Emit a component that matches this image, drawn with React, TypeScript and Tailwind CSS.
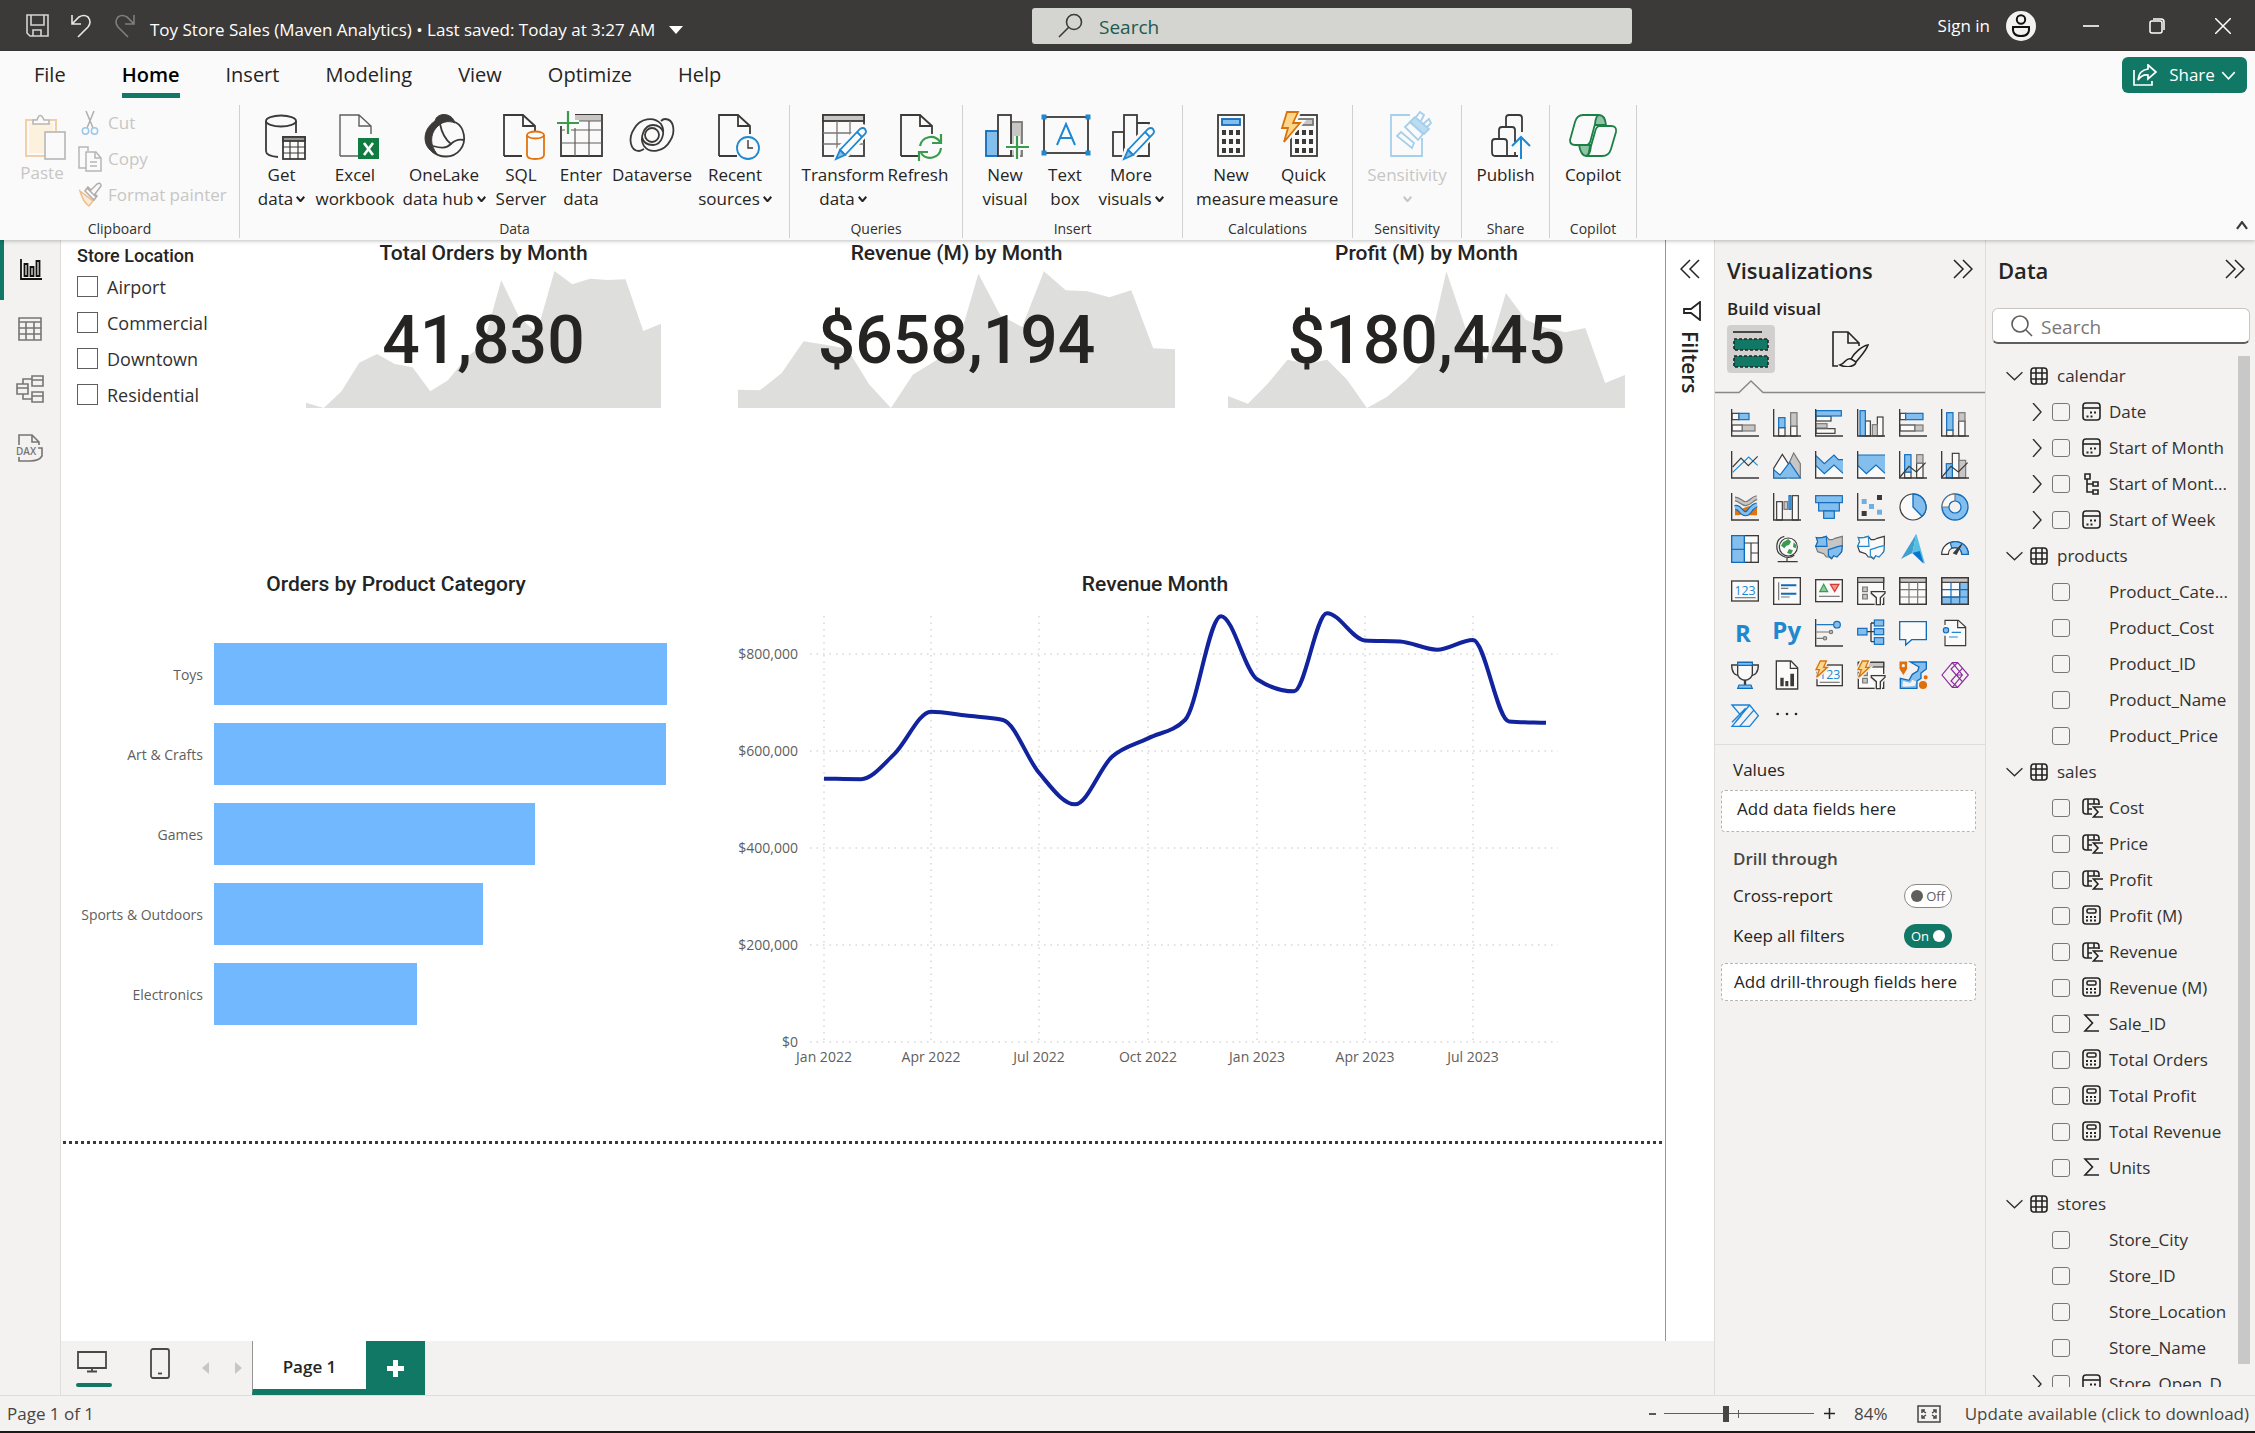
import React from "react";

type P = { children?: React.ReactNode };

const DARK = "#3b3a38";
const BLUE = "#0f6cbd";
const SKY = "#83beec";
const GRAY = "#797775";
const SILVER = "#c8c6c4";
const PAPER = "#fafafa";
const GREEN = "#3a9b4c";

/* ---------- shared helpers ---------- */

function Chevron({ dir, w = 12, h = 8, stroke = 2, color = "currentColor" }: { dir: "down" | "up" | "right"; w?: number; h?: number; stroke?: number; color?: string }) {
  const d = dir === "down" ? "M1 1L6 7L11 1" : dir === "up" ? "M1 7L6 1L11 7" : "M2 0L10 4L2 8";
  return (
    <svg width={w} height={h} viewBox="0 0 12 8" preserveAspectRatio="none" fill="none" stroke={color} strokeWidth={stroke} className="shrink-0">
      <path d={d} vectorEffect="non-scaling-stroke" />
    </svg>
  );
}

function DoubleChevron({ left }: { left?: boolean }) {
  return (
    <svg width="20" height="20" viewBox="0 0 20 20" fill="none" stroke="#252423" strokeWidth="1.5">
      <path d={left ? "M10 1L1 10L10 19M19 1L10 10L19 19" : "M10 1L19 10L10 19M1 1L10 10L1 19"} />
    </svg>
  );
}

/* ---------- ribbon icons, 48 x 48 ---------- */

function Big({ children }: P) {
  return (
    <svg width="48" height="50" viewBox="0 -1 48 50" fill="none" stroke={DARK} strokeWidth="1.8" className="shrink-0 overflow-visible">
      {children}
    </svg>
  );
}

const docPath = (x: number) => `M${x} 44V3H${x + 19}L${x + 31} 14V22M${x + 19} 3V14H${x + 31}M${x} 44H${x + 18}`;

function Pencil() {
  return (
    <g>
      <path d="M41 16Q44 14 46 17Q48 20 46 22L26 44L17 48L20 38Z" fill={PAPER} stroke={PAPER} strokeWidth="6" />
      <path d="M41 17Q44 15 46 17Q48 20 46 22L26 43L21 38Z" fill="#fafafa" stroke="#1e88d0" />
      <path d="M21 38L26 43L17 47Z" fill={SKY} stroke="#1e88d0" />
      <path d="M38 20L43 25" stroke="#1e88d0" />
    </g>
  );
}

function Dots({ x, y }: { x: number; y: number }) {
  return (
    <g fill={DARK} stroke="none">
      {[0, 1, 2].map((r) => [0, 1, 2].map((c) => <rect key={`${r}${c}`} x={x + c * 7} y={y + r * 9} width="4" height="5" />))}
    </g>
  );
}

const icons: Record<string, React.ReactNode> = {
  getData: (
    <Big>
      <ellipse cx="23" cy="9" rx="15" ry="5.5" fill={PAPER} />
      <path d="M8 9V39Q8 44 20 45M38 9V21" />
      <rect x="25" y="25" width="22" height="22" fill={PAPER} />
      <rect x="25" y="25" width="22" height="4" fill="#979593" />
      <path d="M25 35H47M25 41H47M32 29V47M40 29V47" strokeWidth="1.2" />
    </Big>
  ),
  excel: (
    <Big>
      <path d={docPath(9)} stroke="#605e5c" strokeWidth="1.4" />
      <rect x="27" y="26" width="21" height="21" fill="#107c41" stroke="none" />
      <path d="M33 31L42 43M42 31L33 43" stroke="#fff" strokeWidth="2.6" />
    </Big>
  ),
  oneLake: (
    <Big>
      <path d="M15 9C17 0 32 0 35 11C28 8 21 10 16 16C10 23 10 33 17 42C3 38 0 19 15 9Z" fill={DARK} strokeWidth="1" />
      <path d="M35 10C45 15 47 30 40 38C33 47 19 46 12 39" />
      <path d="M20 12C22 22 26 28 31 32C26 37 20 36 13 34M31 32C35 28 39 27 44 28" />
    </Big>
  ),
  sql: (
    <Big>
      <path d={docPath(7)} />
      <path d="M30 23V43Q30 47 38 47Q47 47 47 43V23" fill={PAPER} stroke="#e2740d" />
      <ellipse cx="38.500" cy="23" rx="8.500" ry="3.500" fill={PAPER} stroke="#e2740d" />
    </Big>
  ),
  enter: (
    <Big>
      <path d="M4 14V44H45V3H18" />
      <rect x="18" y="3" width="26" height="6" fill={SILVER} stroke="none" />
      <path d="M18 9H45M4 18H45M4 31H45M18 16V44M32 9V44" strokeWidth="1.2" stroke="#605e5c" />
      <path d="M11 -1V22M0 11H22" stroke={PAPER} strokeWidth="6" />
      <path d="M11 -1V22M0 11H22" stroke={GREEN} strokeWidth="2.200" />
    </Big>
  ),
  dataverse: (
    <Big>
      <circle cx="24" cy="23" r="7" />
      <path d="M37 7C46 7 48 20 42 29C36 40 22 42 16 34C11 26 16 13 25 13C30 13 34 16 35 20M37 7C35 7 34 8 33 9M11 39C2 39 0 26 6 17C12 6 26 4 33 12C38 20 34 33 25 33C19 33 15 30 14 25M11 39C13 39 14 38 16 37" />
    </Big>
  ),
  recent: (
    <Big>
      <path d={docPath(8)} />
      <circle cx="37" cy="36" r="11" fill={PAPER} stroke="#2088cf" />
      <path d="M37 28V36H42" strokeWidth="1.4" />
    </Big>
  ),
  transform: (
    <Big>
      <rect x="4" y="3" width="41" height="41" />
      <rect x="4" y="3" width="41" height="6" fill={SILVER} />
      <path d="M4 21H45M4 32H45M18 9V44M31 9V44" strokeWidth="1.300" stroke={GRAY} />
      <Pencil />
    </Big>
  ),
  refresh: (
    <Big>
      <path d={docPath(7)} />
      <path d="M26 34A11 11 0 0 1 46 30M47 36A11 11 0 0 1 27 41" stroke={GREEN} strokeWidth="2.200" />
      <path d="M47 22V31H38M25 49V40H34" stroke={GREEN} strokeWidth="2.200" />
    </Big>
  ),
  newVisual: (
    <Big>
      <rect x="5" y="19" width="12" height="25" fill={SKY} stroke={BLUE} />
      <rect x="30" y="10" width="11" height="34" fill={SILVER} stroke={GRAY} />
      <rect x="17" y="3" width="13" height="41" fill={PAPER} />
      <path d="M36 24V47M25 35H48" stroke={PAPER} strokeWidth="6" />
      <path d="M36 24V47M25 35H48" stroke={GREEN} strokeWidth="2.200" />
    </Big>
  ),
  textBox: (
    <Big>
      <rect x="3" y="5" width="44" height="36" />
      {[[1, 3], [45, 3], [1, 39], [45, 39]].map(([x, y]) => (
        <rect key={`${x}${y}`} x={x} y={y} width="4" height="4" fill="#1e88d0" stroke="#1e88d0" strokeWidth="1" />
      ))}
      <path d="M16 33L25 12L34 33M19 26H31" stroke="#1e88d0" strokeWidth="2" />
    </Big>
  ),
  more: (
    <Big>
      <rect x="6" y="20" width="11" height="24" />
      <rect x="17" y="3" width="13" height="41" fill={PAPER} />
      <path d="M30 11H42V44H28" />
      <Pencil />
    </Big>
  ),
  calc: (
    <Big>
      <rect x="11" y="3" width="26" height="41" />
      <rect x="15" y="7" width="18" height="6" fill={SKY} stroke={BLUE} />
      <Dots x={15} y={18} />
    </Big>
  ),
  quick: (
    <Big>
      <rect x="11" y="3" width="26" height="41" />
      <rect x="15" y="7" width="18" height="6" fill={SILVER} stroke={GRAY} />
      <Dots x={15} y={18} />
      <path d="M7 0H18L13 11H20L4 30L8 16H2Z" stroke={PAPER} strokeWidth="6" fill={PAPER} />
      <path d="M7 0H18L13 11H20L4 30L8 16H2Z" stroke="#d8730c" fill="#fcd68b" />
    </Big>
  ),
  sensitivity: (
    <Big>
      <path d="M27 3H8V44H39V26" stroke="#a6cfea" />
      <path d="M14 24L18 20L31 31L29 36Z" stroke="#a6cfea" />
      <path d="M27 10L32 5L46 17L41 22Z" fill="#bcdcf0" stroke="#a6cfea" />
      <path d="M33 5L37 0L41 3L38 9M40 12L46 7L48 11L44 15M22 15L27 10L40 22L35 28Z" stroke="#a6cfea" />
    </Big>
  ),
  publish: (
    <Big>
      <path d="M24 14V6Q24 3 27 3H37Q40 3 40 6V20M17 26V18Q17 15 20 15H30Q33 15 33 18V30M33 40V44M10 40V30Q10 27 13 27H22Q25 27 25 30V44H13Q10 44 10 40ZM25 44H36" />
      <path d="M39 47V25M30 34L39 25L48 34" stroke="#1e88d0" strokeWidth="2" />
    </Big>
  ),
  copilot: (
    <Big>
      <path d="M22 3H30Q36 3 37 13H26Q23 3 22 3ZM10 33H21Q20 44 17 44Q12 44 10 33Z" fill="#8fc3a5" stroke="#1b7f46" />
      <path d="M30 3H14Q8 3 6 10L1 28Q1 33 6 33H18Q21 32 22 27L26 12Q27 3 30 3Z" stroke="#1b7f46" fill={PAPER} />
      <path d="M17 44H33Q40 44 42 37L47 20Q48 14 42 14H30Q27 15 26 20L22 34Q21 44 17 44Z" stroke="#1b7f46" fill={PAPER} />
    </Big>
  ),
};

/* ---------- title bar ---------- */

function TitleBar() {
  return (
    <header className="grid h-[51px] shrink-0 grid-cols-[1032fr_600fr_623fr] items-center bg-[#3b3a38] text-white">
      <div className="flex items-center pl-[26px]">
        <button aria-label="Save">
          <svg width="24" height="24" viewBox="0 0 24 24" fill="none" stroke="#d6d4d2" strokeWidth="1.600">
            <path d="M1 1H22V22H4L1 19ZM5 1V11H18V1M7 22V16H15V22" />
          </svg>
        </button>
        <button aria-label="Undo" className="ml-5">
          <svg width="22" height="24" viewBox="0 0 22 24" fill="none" stroke="#e8e6e4" strokeWidth="1.600">
            <path d="M2 1V10H11M2 10L9 3Q14 0 18 3Q22 8 18 13L8 23" />
          </svg>
        </button>
        <button aria-label="Redo" className="ml-[22px]" disabled>
          <svg width="22" height="24" viewBox="0 0 22 24" fill="none" stroke="#807e7c" strokeWidth="1.600">
            <path d="M20 1V10H11M20 10L13 3Q8 0 4 3Q0 8 4 13L14 23" />
          </svg>
        </button>
        <button className="ml-[14px] flex items-center gap-[14px] whitespace-nowrap pt-2 text-[17px] leading-6">
          <span>Toy Store Sales (Maven Analytics) • Last saved: Today at 3:27 AM</span>
          <svg width="14" height="8" viewBox="0 0 14 8" fill="#fff">
            <path d="M0 0H14L7 8Z" />
          </svg>
        </button>
      </div>
      <label className="flex h-9 items-center gap-4 rounded-[3px] bg-[#d4d4d1] pl-[26px]">
        <svg width="25" height="25" viewBox="0 0 25 25" fill="none" stroke="#3b3a38" strokeWidth="1.600" className="shrink-0">
          <circle cx="16" cy="9" r="7.500" />
          <path d="M10.500 14.500L1 24" />
        </svg>
        <input aria-label="Search" placeholder="Search" className="h-full w-full bg-transparent pt-[2px] text-[19px] outline-none placeholder:text-[#215a4f]" />
      </label>
      <div className="flex items-center justify-end pr-6">
        <button className="flex items-center gap-4 text-[17px]">
          Sign in
          <svg width="30" height="30" viewBox="0 0 30 30">
            <circle cx="15" cy="15" r="15" fill="#f3f2f1" />
            <g fill="none" stroke="#111" strokeWidth="2">
              <circle cx="15" cy="8.500" r="4.200" />
              <path d="M7 16H23Q24 25 15 25Q6 25 7 16Z" />
            </g>
          </svg>
        </button>
        <button aria-label="Minimize" className="ml-[47px]">
          <svg width="16" height="16" stroke="#fff" strokeWidth="1.600"><path d="M0 8H16" /></svg>
        </button>
        <button aria-label="Restore" className="ml-[50px]">
          <svg width="16" height="16" viewBox="0 0 16 16" fill="none" stroke="#fff" strokeWidth="1.500">
            <rect x="1" y="3" width="12" height="12" rx="2" />
            <path d="M4 1H12Q15 1 15 4V12" />
          </svg>
        </button>
        <button aria-label="Close" className="ml-[50px]">
          <svg width="16" height="16" viewBox="0 0 16 16" fill="none" stroke="#fff" strokeWidth="1.500"><path d="M0 0L16 16M16 0L0 16" /></svg>
        </button>
      </div>
    </header>
  );
}

/* ---------- ribbon ---------- */

function RibbonButton({ icon, lines, caret, width, muted }: { icon: string; lines: string[]; caret?: boolean; width: string; muted?: boolean }) {
  return (
    <button disabled={muted} className={`flex shrink-0 flex-col items-center whitespace-nowrap text-[17px] leading-6 ${width} ${muted ? "text-[#c8c6c4]" : "text-[#252423]"}`}>
      {icons[icon]}
      <span className="mt-[2px]">{lines[0]}</span>
      <span className="flex h-6 items-center gap-[3px]">
        {lines[1]}
        {caret && <Chevron dir="down" w={9} h={6} stroke={2} />}
      </span>
    </button>
  );
}

function Group({ label, pad, children }: { label: string; pad: string } & P) {
  return (
    <section aria-label={label} className="flex shrink-0 flex-col justify-between border-r border-[#d2d0ce]">
      <div className={`flex pt-[6px] ${pad}`}>{children}</div>
      <div className="pb-px text-center text-[14px] leading-4 text-[#323130]">{label}</div>
    </section>
  );
}

const tabs = ["File", "Home", "Insert", "Modeling", "View", "Optimize", "Help"];

function Ribbon() {
  return (
    <div className="relative z-10 flex h-[189px] shrink-0 flex-col bg-[#fafafa] shadow-[0_1px_4px_rgba(0,0,0,0.25)]">
      <nav className="flex h-[54px] items-start pl-[34px] pr-2">
        {tabs.map((t, i) => (
          <button
            key={t}
            className={`h-[47px] border-b-[5px] pt-[5px] text-[20px] leading-9 text-[#252423] ${i === 0 ? "mr-[56px]" : "mr-[46px]"} ${t === "Home" ? "border-[#117865] font-semibold text-black" : "border-transparent"}`}
          >
            {t}
          </button>
        ))}
        <button className="ml-auto mt-[6px] flex h-9 w-[125px] items-center justify-center gap-3 rounded-md bg-[#117865] text-[17px] text-white">
          <svg width="24" height="22" viewBox="0 0 24 22" fill="none" stroke="#fff" strokeWidth="1.700">
            <path d="M1 6V21H19V17" />
            <path d="M15 1L23 8L15 15V11Q9 10 5 16Q6 6 15 5Z" />
          </svg>
          <span className="flex items-center gap-[6px]">Share <Chevron dir="down" w={15} h={9} stroke={1.5} /></span>
        </button>
      </nav>
      <div className="flex h-[133px]">
        <section aria-label="Clipboard" className="flex w-[240px] shrink-0 flex-col justify-between border-r border-[#d2d0ce]">
          <div className="flex text-[17px] leading-6 text-[#c8c6c4]">
            <button disabled className="ml-4 flex w-[52px] flex-col items-center pt-2">
              <svg width="42" height="48" viewBox="0 0 42 48" fill="none" className="translate-x-[3px]">
                <path d="M14 7H2V43H21M26 7H32V18" stroke="#f3cfa6" strokeWidth="2" />
                <path d="M5 10H29V18H20V40H5Z" fill="#fbf1dc" />
                <path d="M9 11V7H13Q16 -2 20 7H25V11Z" fill={PAPER} stroke="#b8b6b4" strokeWidth="1.600" />
                <rect x="21" y="19" width="20" height="27" fill={PAPER} stroke="#b8b6b4" strokeWidth="1.600" />
              </svg>
              <span>Paste</span>
            </button>
            <div className="ml-[10px] flex flex-col">
              <button disabled className="flex h-9 items-center gap-[6px]">
                <svg width="24" height="26" viewBox="0 0 24 26" fill="none" strokeWidth="1.500">
                  <path d="M8 1L15 18M16 1L9 18" stroke="#b0aeac" />
                  <circle cx="7.500" cy="21" r="3.200" stroke="#9cc8e6" /><circle cx="16.500" cy="21" r="3.200" stroke="#9cc8e6" />
                </svg>
                Cut
              </button>
              <button disabled className="flex h-9 items-center gap-[6px]">
                <svg width="24" height="26" viewBox="0 0 24 26" fill="none" stroke="#b8b6b4" strokeWidth="1.500">
                  <path d="M8 22H1V1H10V5M8 6H18L23 12V25H8ZM17 6V12H23M12 16H19M12 20H19" />
                </svg>
                Copy
              </button>
              <button disabled className="flex h-9 items-center gap-[6px]">
                <svg width="24" height="26" viewBox="0 0 24 26" fill="none" strokeWidth="1.500">
                  <path d="M2 9L15 19L11 24Q5 20 2 9Z" fill="#fbead5" stroke="#eebd8c" />
                  <path d="M9 6L18 15M10 5L13 8L19 2Q23 0 23 4L17 12L19 14L16 18L7 9Z" stroke="#b0aeac" />
                </svg>
                Format painter
              </button>
            </div>
          </div>
          <div className="pb-px text-center text-[14px] leading-4 text-[#323130]">Clipboard</div>
        </section>
        <Group label="Data" pad="pl-[10px] pr-3">
          <RibbonButton icon="getData" lines={["Get", "data"]} caret width="w-[63px]" />
          <RibbonButton icon="excel" lines={["Excel", "workbook"]} width="w-[84px]" />
          <RibbonButton icon="oneLake" lines={["OneLake", "data hub"]} caret width="w-[94px]" />
          <RibbonButton icon="sql" lines={["SQL", "Server"]} width="w-[60px]" />
          <RibbonButton icon="enter" lines={["Enter", "data"]} width="w-[60px]" />
          <RibbonButton icon="dataverse" lines={["Dataverse"]} width="w-[82px]" />
          <RibbonButton icon="recent" lines={["Recent", "sources"]} caret width="w-[84px]" />
        </Group>
        <Group label="Queries" pad="pl-[10px] pr-3">
          <RibbonButton icon="transform" lines={["Transform", "data"]} caret width="w-[86px]" />
          <RibbonButton icon="refresh" lines={["Refresh"]} width="w-[64px]" />
        </Group>
        <Group label="Insert" pad="pl-4 pr-[19px]">
          <RibbonButton icon="newVisual" lines={["New", "visual"]} width="w-[52px]" />
          <RibbonButton icon="textBox" lines={["Text", "box"]} width="w-[68px]" />
          <RibbonButton icon="more" lines={["More", "visuals"]} caret width="w-[64px]" />
        </Group>
        <Group label="Calculations" pad="px-3">
          <RibbonButton icon="calc" lines={["New", "measure"]} width="w-[72px]" />
          <RibbonButton icon="quick" lines={["Quick", "measure"]} width="w-[73px]" />
        </Group>
        <Group label="Sensitivity" pad="">
          <RibbonButton icon="sensitivity" lines={["Sensitivity"]} caret muted width="w-[108px]" />
        </Group>
        <Group label="Share" pad="">
          <RibbonButton icon="publish" lines={["Publish"]} width="w-[87px]" />
        </Group>
        <Group label="Copilot" pad="">
          <RibbonButton icon="copilot" lines={["Copilot"]} width="w-[86px]" />
        </Group>
        <button aria-label="Collapse ribbon" className="mb-2 ml-auto mr-[7px] self-end">
          <Chevron dir="up" w={12} h={9} stroke={2.2} color={DARK} />
        </button>
      </div>
    </div>
  );
}

/* ---------- left rail ---------- */

function Rail() {
  return (
    <nav className="flex w-[61px] shrink-0 flex-col border-r border-[#dedddc] bg-[#f3f2f1]">
      <button aria-label="Report view" className="flex h-[60px] items-center border-l-4 border-[#117865] pl-4">
        <svg width="22" height="22" viewBox="0 0 22 22" fill="none" stroke="#111" strokeWidth="1.800">
          <path d="M1 0V20H22" />
          <path d="M4.500 5H7.500V17H4.500ZM10.500 8H13.500V17H10.500ZM16.500 2H19.500V17H16.500Z" />
        </svg>
      </button>
      <button aria-label="Table view" className="flex h-[58px] items-center justify-center">
        <svg width="24" height="24" viewBox="0 0 24 24" fill="none" stroke="#777573" strokeWidth="1.600">
          <path d="M1 1H23V23H1ZM1 5H23M1 11H23M1 17H23M8 5V23M16 5V23" />
        </svg>
      </button>
      <button aria-label="Model view" className="flex h-[61px] items-center justify-center">
        <svg width="28" height="28" viewBox="0 0 28 28" fill="none" stroke="#777573" strokeWidth="1.600">
          <path d="M1 9H12V19H1ZM1 13H12M16 1H27V11H16ZM16 5H27M16 17H27V27H16ZM16 21H27M7 9V4H16M7 19V24H16" />
        </svg>
      </button>
      <button aria-label="DAX query view" className="flex h-[58px] items-center justify-center">
        <svg width="28" height="28" viewBox="0 0 28 28" fill="none" stroke="#777573" strokeWidth="1.600">
          <path d="M3 11V1H16L23 8V11M16 1V8H23M3 23V27H14" />
          <text x="0" y="21" fontSize="10" fontWeight="600" fill="#777573" stroke="none" fontFamily="Open Sans, sans-serif">DAX</text>
          <path d="M14 27Q23 27 26 22V14L22 14" />
        </svg>
      </button>
    </nav>
  );
}

/* ---------- report ---------- */

const ordersTrend = [517, 533, 483, 397, 371, 401, 411, 483, 450, 384, 340, 150, 260, 307, 122, 162, 145, 149, 147, 302, 280];
const revenueTrend = [478, 480, 428, 333, 343, 355, 462, 533, 433, 393, 355, 130, 255, 290, 123, 180, 183, 201, 180, 354, 357];
const profitTrend = [497, 520, 460, 388, 400, 388, 448, 533, 500, 448, 385, 123, 300, 390, 188, 268, 292, 306, 293, 458, 434];

function Kpi({ title, value, trend, size }: { title: string; value: string; trend: number[]; size: string }) {
  const pts = trend.map((v, i) => `${i},${v - 122}`).join(" ");
  return (
    <article className={`relative ${size}`}>
      <h2 className="text-center font-['Roboto'] text-[21px] font-medium leading-6 text-[#252423]">{title}</h2>
      <svg viewBox="0 0 20 411" preserveAspectRatio="none" className="mt-[6px] h-[137px] w-full">
        <polygon points={`0,411 ${pts} 20,411`} fill="#dededd" />
      </svg>
      <p className="absolute inset-x-0 top-[62px] text-center font-['Roboto'] text-[66px] font-medium leading-[76px] text-[#252423]">{value}</p>
    </article>
  );
}

const categories = [
  { name: "Toys", v: 453 },
  { name: "Art & Crafts", v: 452 },
  { name: "Games", v: 321 },
  { name: "Sports & Outdoors", v: 269 },
  { name: "Electronics", v: 203 },
];

const monthX = [86, 123, 156, 193, 228, 265, 301, 337, 374, 410, 447, 483, 519, 556, 589, 627, 662, 699, 735, 771, 808];
const monthV = [543, 542, 593, 681, 673, 664, 555, 490, 588, 626, 664, 878, 748, 723, 884, 828, 826, 809, 829, 661, 658];

function curve(xs: number[], ys: number[]) {
  const n = xs.length;
  const s = xs.slice(1).map((x, i) => (ys[i + 1] - ys[i]) / (x - xs[i]));
  const m = ys.map((_, i) => {
    if (i === 0) return s[0];
    if (i === n - 1) return s[n - 2];
    if (s[i - 1] * s[i] <= 0) return 0;
    const h0 = xs[i] - xs[i - 1];
    const h1 = xs[i + 1] - xs[i];
    const p = (s[i - 1] * h1 + s[i] * h0) / (h0 + h1);
    return Math.sign(p) * 2 * Math.min(Math.abs(s[i - 1]), Math.abs(s[i]), Math.abs(p) / 2);
  });
  let d = `M${xs[0]} ${ys[0]}`;
  for (let i = 0; i < n - 1; i++) {
    const h = (xs[i + 1] - xs[i]) / 3;
    d += `C${xs[i] + h} ${ys[i] + m[i] * h} ${xs[i + 1] - h} ${ys[i + 1] - m[i + 1] * h} ${xs[i + 1]} ${ys[i + 1]}`;
  }
  return d;
}

function RevenueChart() {
  const y = (v: number) => 438 - (v * 388) / 800;
  const quarters: [number, string][] = [[86, "Jan 2022"], [193, "Apr 2022"], [301, "Jul 2022"], [410, "Oct 2022"], [519, "Jan 2023"], [627, "Apr 2023"], [735, "Jul 2023"]];
  return (
    <svg viewBox="0 0 834 465" className="h-auto w-full" role="img" aria-label="Revenue by month" fontFamily="Open Sans, sans-serif" fontSize="14" fill="#605e5c">
      {[800, 600, 400, 200, 0].map((v) => (
        <g key={v}>
          <line x1="72" x2="820" y1={y(v)} y2={y(v)} stroke="#d8d8d8" strokeWidth="1.500" strokeDasharray="1.500 5" />
          <text x="60" y={y(v) + 5} textAnchor="end">{v ? `$${v},000` : "$0"}</text>
        </g>
      ))}
      {quarters.map(([x, label]) => (
        <g key={label}>
          <line x1={x} x2={x} y1="12" y2="438" stroke="#d8d8d8" strokeWidth="1.500" strokeDasharray="1.500 5" />
          <text x={x} y="458" textAnchor="middle">{label}</text>
        </g>
      ))}
      <path d={curve(monthX, monthV.map(y))} fill="none" stroke="#12239e" strokeWidth="4" />
    </svg>
  );
}

function Report() {
  return (
    <main className="min-w-0 flex-1 overflow-hidden border-r border-[#979593] bg-white">
      <div className="flex h-[332px] pl-4 pt-px">
        <fieldset className="w-[229px] shrink-0 pt-[3px]">
          <legend className="float-left w-full font-['Roboto'] text-[18px] font-medium leading-6 text-[#252423]">Store Location</legend>
          <div className="clear-both flex flex-col">
            {["Airport", "Commercial", "Downtown", "Residential"].map((s) => (
              <label key={s} className="flex h-9 items-center gap-[9px] text-[18px] text-[#323130]">
                <input type="checkbox" className="h-[21px] w-[21px] appearance-none border-[1.500px] border-[#605e5c] bg-white" />
                <span className="pt-[2px]">{s}</span>
              </label>
            ))}
          </div>
        </fieldset>
        <div className="flex min-w-0 flex-1 pr-10">
          <Kpi title="Total Orders by Month" value="41,830" trend={ordersTrend} size="mr-[77px] flex-[355]" />
          <Kpi title="Revenue (M) by Month" value="$658,194" trend={revenueTrend} size="mr-[53px] flex-[437]" />
          <Kpi title="Profit (M) by Month" value="$180,445" trend={profitTrend} size="flex-[397]" />
        </div>
      </div>
      <div className="flex h-[569px] gap-[23px] pl-4 pr-[93px]">
        <section className="flex-[638]">
          <h2 className="text-center font-['Roboto'] text-[21px] font-medium leading-6 text-[#252423]">Orders by Product Category</h2>
          <ul className="mt-[47px] flex flex-col gap-[18px] pr-12">
            {categories.map((c) => (
              <li key={c.name} className="flex h-[62px] items-center gap-[11px]">
                <span className="w-[126px] whitespace-nowrap text-right text-[14px] text-[#605e5c]">{c.name}</span>
                <span className="h-full flex-1">
                  <span className="block h-full bg-[#71b8ff]" style={{ width: `${(c.v / 453) * 100}%` }} />
                </span>
              </li>
            ))}
          </ul>
        </section>
        <section className="flex-[834]">
          <h2 className="mb-2 text-center font-['Roboto'] text-[21px] font-medium leading-6 text-[#252423]">Revenue Month</h2>
          <RevenueChart />
        </section>
      </div>
      <div className="mx-[2px] h-[3px] bg-[repeating-linear-gradient(90deg,#3b3a38_0_3px,transparent_3px_6px)]" />
    </main>
  );
}

function FiltersStrip() {
  return (
    <aside className="flex w-12 shrink-0 flex-col items-center bg-white pt-[19px]">
      <button aria-label="Expand filters"><DoubleChevron left /></button>
      <svg width="18" height="20" viewBox="0 0 18 20" fill="none" stroke="#252423" strokeWidth="1.800" className="ml-[3px] mt-[22px]">
        <path d="M17 1V19L8 12H1V8H8Z" />
      </svg>
      <h2 className="mt-[10px] text-[21px] font-semibold leading-6 text-[#252423] [writing-mode:vertical-rl]">Filters</h2>
    </aside>
  );
}

function PageTabs() {
  return (
    <div className="flex h-[54px] shrink-0 bg-[#f3f2f1]">
      <button aria-label="Desktop layout" className="ml-[15px] flex w-9 flex-col items-center pt-[10px]">
        <svg width="30" height="22" viewBox="0 0 30 22" fill="none" stroke="#4a4846" strokeWidth="1.800" className="-ml-1">
          <path d="M1 1H29V17H1ZM15 17V20M10 20.500H20" />
        </svg>
        <span className="mt-[10px] h-1 w-9 rounded-full bg-[#117865]" />
      </button>
      <button aria-label="Mobile layout" className="ml-[38px] h-[45px]">
        <svg width="20" height="31" viewBox="0 0 20 31" fill="none" stroke="#4a4846" strokeWidth="1.800">
          <rect x="1" y="1" width="18" height="29" rx="2" /><path d="M8 25.500H12" />
        </svg>
      </button>
      <button aria-label="Previous page" className="ml-8"><svg width="7" height="12"><path d="M7 0V12L0 6Z" fill="#c8c6c4" /></svg></button>
      <button aria-label="Next page" className="ml-[26px]"><svg width="7" height="12"><path d="M0 0V12L7 6Z" fill="#c8c6c4" /></svg></button>
      <button className="ml-[10px] w-[114px] border-b-[6px] border-l border-b-[#117865] border-l-[#979593] bg-white pt-1 text-[17px] font-semibold text-[#252423]">Page 1</button>
      <button aria-label="New page" className="flex w-[59px] items-center justify-center bg-[#117865]">
        <svg width="17" height="17" stroke="#fff" strokeWidth="5"><path d="M8.500 0V17M0 8.500H17" /></svg>
      </button>
    </div>
  );
}

/* ---------- visualization gallery ---------- */

type RectSpec = [number, number, number, number, "b" | "g" | "w"];

function Bars({ r }: { r: RectSpec[] }) {
  const fill = { b: SKY, g: SILVER, w: PAPER };
  const line = { b: BLUE, g: GRAY, w: DARK };
  const order = { w: 0, g: 1, b: 2 };
  return (
    <>
      {[...r].sort((p, q) => order[p[4]] - order[q[4]]).map(([x1, y1, x2, y2, k], i) => (
        <rect key={i} x={x1} y={y1} width={x2 - x1} height={y2 - y1} fill={fill[k]} stroke={line[k]} />
      ))}
    </>
  );
}

const Axis = () => <path d="M2 0V81H84" strokeWidth="4" />;
const trendLine = <path d="M3 78L30 46L52 63L80 35" />;
const bolt = (
  <g>
    <path d="M14 0H36L27 20H38L4 52L12 28H0Z" fill="#f3f2f1" stroke="#f3f2f1" strokeWidth="9" />
    <path d="M16 0H34L26 19H37L5 49L13 26H3Z" fill="#fcd68b" stroke="#d8730c" strokeWidth="4" />
  </g>
);
const funnelMark = (
  <g>
    <path d="M42 44H84V50L70 65V82H58V65L42 50Z" fill="#f3f2f1" stroke="#f3f2f1" strokeWidth="10" />
    <path d="M43 44H84V49L70 62V83H58V62L43 49Z" fill={PAPER} strokeWidth="4" />
  </g>
);
const mapShape = "M4 8C12 10 22 8 34 4L42 14H52L60 10L82 4V30L80 50C76 56 72 60 66 60L56 62L50 72L42 66H34L26 56L8 50L2 34L8 20Z";

const gallery: React.ReactNode[] = [
  <><Bars r={[[3, 13, 24, 32, "w"], [24, 13, 54, 32, "b"], [3, 48, 34, 66, "w"], [34, 48, 72, 66, "g"]]} /><Axis /></>,
  <><Bars r={[[17, 26, 36, 56, "b"], [17, 56, 36, 81, "w"], [53, 11, 72, 51, "g"], [53, 51, 72, 81, "w"]]} /><Axis /></>,
  <><Bars r={[[3, 5, 79, 21, "b"], [3, 21, 48, 36, "w"], [3, 44, 36, 57, "g"], [3, 59, 60, 73, "w"]]} /><Axis /></>,
  <><Bars r={[[9, 5, 25, 81, "b"], [25, 36, 40, 81, "w"], [46, 47, 61, 81, "g"], [61, 24, 78, 81, "w"]]} /><Axis /></>,
  <><Bars r={[[3, 13, 20, 32, "w"], [20, 13, 72, 32, "b"], [3, 48, 48, 66, "w"], [48, 48, 72, 66, "g"]]} /><Axis /></>,
  <><Bars r={[[17, 11, 36, 63, "b"], [17, 63, 36, 81, "w"], [53, 11, 72, 36, "g"], [53, 36, 72, 81, "w"]]} /><Axis /></>,

  <><path d="M5 64L53 18L80 43" stroke="#2088cf" /><path d="M5 48L30 21L52 44L80 16" /><Axis /></>,
  <><path d="M42 50L62 6L82 38V81H50Z" fill={SILVER} stroke={GRAY} /><path d="M2 52L28 10L60 60L40 81H2Z" fill={PAPER} /><path d="M2 56L21 72L50 34L82 81H2Z" fill={SKY} stroke={BLUE} /></>,
  <><path d="M3 40L28 66L57 42L84 66V81H3Z" fill={PAPER} stroke="none" /><path d="M3 14L28 38L57 12L70 26H84V67L57 42L28 68L3 44Z" fill={SKY} stroke="none" /><path d="M3 14L28 38L57 12L70 26H84M3 44L28 68L57 42L84 67" stroke={BLUE} /><Axis /></>,
  <><path d="M3 40L28 66L57 42L84 66V81H3Z" fill={PAPER} stroke="none" /><path d="M3 12H84V67L57 42L28 68L3 44Z" fill={SKY} stroke="none" /><path d="M3 12H84M3 44L28 68L57 42L84 67" stroke={BLUE} /><Axis /></>,
  <><Bars r={[[17, 11, 36, 63, "b"], [17, 63, 36, 81, "w"], [53, 11, 72, 36, "g"], [53, 36, 72, 81, "w"]]} />{trendLine}<Axis /></>,
  <><Bars r={[[16, 38, 34, 81, "b"], [34, 7, 54, 81, "w"], [54, 28, 74, 81, "g"]]} />{trendLine}<Axis /></>,

  <><path d="M12 60H22C34 58 46 44 60 46H78M12 54H30M50 60H78" stroke="#e2740d" strokeWidth="14" /><path d="M12 44C28 40 28 62 44 62C58 62 56 40 78 36" stroke={BLUE} strokeWidth="16" /><path d="M12 44C28 40 28 62 44 62C58 62 56 40 78 36" stroke={SKY} strokeWidth="9" /><path d="M12 18C26 18 32 32 44 32C58 32 62 16 78 14" stroke={GRAY} strokeWidth="15" /><path d="M12 18C26 18 32 32 44 32C58 32 62 16 78 14" stroke={SILVER} strokeWidth="8" /><Axis /></>,
  <><Bars r={[[11, 26, 28, 81, "w"], [33, 26, 44, 49, "g"], [58, 8, 76, 81, "w"], [48, 8, 54, 49, "b"]]} /><Axis /></>,
  <Bars r={[[2, 8, 82, 29, "b"], [11, 29, 73, 54, "b"], [26, 54, 58, 76, "b"]]} />,
  <><Axis /><g stroke="none"><rect x="14" y="18" width="15" height="15" fill="#6fb0e4" /><rect x="60" y="6" width="15" height="15" fill={DARK} /><rect x="36" y="33" width="15" height="15" fill="#6fb0e4" /><rect x="14" y="54" width="15" height="15" fill={DARK} /><rect x="60" y="50" width="15" height="15" fill="#6fb0e4" /></g></>,
  <><circle cx="42" cy="42" r="39" fill={PAPER} /><path d="M42 42V3A39 39 0 0 1 69 70Z" fill={SKY} stroke={BLUE} strokeWidth="4" /></>,
  <><circle cx="42" cy="42" r="39" fill={SKY} stroke={BLUE} strokeWidth="4" /><path d="M3 42A39 39 0 0 1 42 3V24A18 18 0 0 0 24 42Z" fill={PAPER} stroke={GRAY} /><circle cx="42" cy="42" r="18" fill="#f3f2f1" stroke={BLUE} /></>,

  <><rect x="2" y="2" width="80" height="80" fill={PAPER} strokeWidth="4" /><path d="M2 2H40V82H2Z" fill={SKY} stroke={BLUE} strokeWidth="4" /><path d="M2 43H40" stroke={BLUE} /><path d="M40 24H82M60 24V82M60 54H82" /></>,
  <><circle cx="46" cy="36" r="27" fill={PAPER} /><path d="M30 22L46 12L54 20L48 30L40 32L34 40L24 32ZM48 42L60 46L54 58L42 54ZM62 22L70 30L68 40L60 36Z" fill={GREEN} stroke="none" /><path d="M34 4C6 10 4 52 28 62C40 70 56 68 64 60M42 68V78M14 80H74" /></>,
  <><path d={mapShape} fill={SILVER} stroke={GRAY} /><path d="M4 8C12 10 22 8 34 4L36 34H2L8 20ZM40 44C50 42 60 36 82 32L80 50C76 56 72 60 66 66L56 62L50 70L40 62Z" fill={SKY} stroke={BLUE} /></>,
  <><path d={mapShape} fill={PAPER} stroke={DARK} /><path d="M4 8C12 10 22 8 34 4L36 34H2L8 20ZM40 44C50 42 60 36 82 32L80 50C76 56 72 60 66 66L56 62L50 70L40 62Z" fill={PAPER} stroke="#2088cf" /></>,
  <g stroke="none"><path d="M52 -4L6 72L40 54Z" fill="#3da0d0" /><path d="M52 -4L40 54L78 86Z" fill="#56bfe3" /><path d="M40 54L74 86L62 48Z" fill="#0a74cf" /></g>,
  <><path d="M2 58C2 36 20 20 42 20S82 36 82 58H62C62 46 54 38 42 38S22 46 22 58Z" fill={PAPER} /><path d="M28 24C50 12 82 28 82 58H62C62 48 56 40 46 38H32Z" fill={SKY} stroke={BLUE} /><path d="M62 28L46 58L38 54Z" fill={DARK} /></>,

  <><rect x="2" y="12" width="80" height="60" fill={PAPER} strokeWidth="4" /><text x="42" y="55" textAnchor="middle" fontSize="37" fill="#2088cf" stroke="none">123</text><path d="M12 62H74" stroke={GRAY} /></>,
  <><rect x="2" y="2" width="80" height="80" fill={PAPER} strokeWidth="4" /><path d="M17 16V70M24 34H46M24 60H50" stroke={GRAY} /><path d="M24 25H70M24 50H70" stroke={BLUE} strokeWidth="6" /></>,
  <><rect x="2" y="8" width="80" height="66" fill={PAPER} strokeWidth="4" /><path d="M14 44L26 22L38 44Z" fill="#8ccb9b" stroke={GREEN} /><path d="M46 22H72L59 44Z" fill="#f3948c" stroke="#d63a32" /><path d="M12 58H74" stroke={GRAY} /></>,
  <><rect x="2" y="2" width="78" height="80" fill={PAPER} strokeWidth="4" /><rect x="2" y="2" width="78" height="14" fill={SILVER} /><path d="M17 30H31V44H17ZM17 52H31V66H17Z" fill={SILVER} stroke={GRAY} />{funnelMark}</>,
  <><rect x="2" y="2" width="80" height="80" fill={PAPER} /><rect x="2" y="2" width="80" height="14" fill={SILVER} /><path d="M2 38H82M2 60H82M30 16V82M56 16V82" stroke={GRAY} /><rect x="2" y="2" width="80" height="80" strokeWidth="4" /></>,
  <><rect x="2" y="2" width="80" height="80" fill={PAPER} /><path d="M56 16H82V82H2V60H56Z" fill={SKY} /><rect x="2" y="2" width="80" height="14" fill={SILVER} /><path d="M2 38H82M2 60H82M30 16V82M56 16V82" stroke={BLUE} /><rect x="2" y="2" width="80" height="80" strokeWidth="4" /></>,

  <text x="36" y="68" textAnchor="middle" fontSize="72" fontWeight="700" fill="#2088cf" stroke="none">R</text>,
  <text x="41" y="60" textAnchor="middle" fontSize="72" fontWeight="700" fill="#2088cf" stroke="none">Py</text>,
  <><Axis /><path d="M4 17H56" stroke={BLUE} /><circle cx="66" cy="17" r="10" fill={SKY} stroke={BLUE} /><path d="M4 39H42M4 58H24" stroke={GRAY} /><circle cx="48" cy="39" r="5" fill={SILVER} stroke={GRAY} /><circle cx="30" cy="58" r="5" fill={SILVER} stroke={GRAY} /></>,
  <><path d="M30 38H52M42 12V68M42 12H52M42 68H52" strokeWidth="4" /><Bars r={[[2, 28, 30, 48, "b"], [52, 3, 80, 21, "b"], [52, 29, 80, 47, "b"], [52, 56, 80, 76, "b"]]} /></>,
  <path d="M2 8H82V62H38L20 78V62H2Z" fill={PAPER} stroke={BLUE} strokeWidth="4" />,
  <><path d="M12 18V4H52L74 24V80H12V50" fill={PAPER} /><path d="M50 4V26H74" /><circle cx="15" cy="34" r="8" fill={SKY} stroke={BLUE} /><path d="M32 40H60M24 54H50" stroke="#2088cf" /></>,

  <><path d="M20 12H2C2 32 10 44 28 44M64 12H82C82 32 74 44 56 44" strokeWidth="4" /><path d="M20 4H64V40C62 50 54 56 42 58C30 56 22 50 20 40Z" fill={PAPER} strokeWidth="4" /><path d="M20 4H64V13H20Z" fill={SKY} stroke={BLUE} /><path d="M42 56V72" strokeWidth="7" /><path d="M24 72H60L64 82H20Z" fill={SKY} stroke={BLUE} /></>,
  <><path d="M10 0H54L74 20V84H10Z" fill={PAPER} strokeWidth="4" /><path d="M52 0V22H74" /><path d="M22 50H32V76H22ZM37 60H46V76H37ZM52 38H63V76H52Z" fill={DARK} stroke="none" /></>,
  <><rect x="6" y="12" width="76" height="62" fill={PAPER} strokeWidth="4" /><text x="44" y="55" textAnchor="middle" fontSize="37" fill="#2088cf" stroke="none">123</text><path d="M14 64H74" stroke={GRAY} />{bolt}</>,
  <><rect x="4" y="4" width="76" height="78" fill={PAPER} strokeWidth="4" /><rect x="4" y="4" width="76" height="14" fill={SILVER} /><path d="M17 52H31V66H17ZM20 32H31V44H20Z" fill={SILVER} stroke={GRAY} />{funnelMark}{bolt}</>,
  <><path d="M34 3H82V24L66 36V52L54 60V82H4V52L30 58L40 40L56 30L60 18Z" fill={SKY} stroke={BLUE} strokeWidth="4" /><path d="M10 76L12 60L34 66L40 56L52 62L48 74L20 77Z" fill="#f3f2f1" stroke="none" /><path d="M0 0H26V24L13 44L0 24Z" fill="#df6f0b" stroke="#f3f2f1" strokeWidth="3" /><circle cx="13" cy="14" r="5" fill="#f3f2f1" stroke="none" /><circle cx="72" cy="72" r="14" fill="#df6f0b" stroke="#f3f2f1" /><circle cx="80" cy="49" r="8" fill="#df6f0b" stroke="#f3f2f1" /></>,
  <g stroke="#8b2a9b"><path d="M34 5H50L82 42L50 79H34L3 42Z" /><path d="M34 5L64 42L34 79M50 5L30 24L46 42L30 60L50 79M64 22L46 42L64 62M46 42H64" /></g>,

  <path d="M3 6H56L82 38L56 70H3L30 38ZM3 6L30 38M56 6L14 56M68 22L26 70M3 58L44 16" stroke="#1783dc" strokeWidth="4" fill="none" />,
  <g fill="#252423" stroke="none"><circle cx="14" cy="33" r="4" /><circle cx="42" cy="33" r="4" /><circle cx="69" cy="33" r="4" /></g>,
];

const galleryNames = [
  "Stacked bar chart", "Stacked column chart", "Clustered bar chart", "Clustered column chart", "100% stacked bar chart", "100% stacked column chart",
  "Line chart", "Area chart", "Stacked area chart", "100% stacked area chart", "Line and stacked column chart", "Line and clustered column chart",
  "Ribbon chart", "Waterfall chart", "Funnel", "Scatter chart", "Pie chart", "Donut chart",
  "Treemap", "Map", "Filled map", "Shape map", "Azure map", "Gauge",
  "Card", "Multi-row card", "KPI", "Slicer", "Table", "Matrix",
  "R script visual", "Python visual", "Key influencers", "Decomposition tree", "Q&A", "Narrative",
  "Goals", "Paginated report", "Card (new)", "Slicer (new)", "ArcGIS Maps", "Power Apps",
  "Power Automate", "Get more visuals",
];

function Toggle({ id, on }: { id: string; on: boolean }) {
  return (
    <label htmlFor={id} className={`relative flex h-6 w-12 items-center rounded-full text-[13px] ${on ? "justify-start bg-[#117865] pl-[7px] text-white" : "justify-end border border-[#8a8886] bg-white pr-[6px] text-[#605e5c]"}`}>
      <input id={id} type="checkbox" role="switch" defaultChecked={on} className={`absolute top-1/2 h-3 w-3 -translate-y-1/2 appearance-none rounded-full ${on ? "right-[7px] bg-white" : "left-[6px] bg-[#605e5c]"}`} />
      {on ? "On" : "Off"}
    </label>
  );
}

function Visualizations() {
  return (
    <aside className="flex w-[271px] shrink-0 flex-col border-l border-[#dedddc] bg-[#f3f2f1] text-[17px] text-[#252423]">
      <div className="flex h-[58px] items-center justify-between pl-3 pr-3">
        <h2 className="pt-[2px] text-[22px] font-semibold">Visualizations</h2>
        <button aria-label="Collapse visualizations"><DoubleChevron /></button>
      </div>
      <h3 className="pl-3 font-semibold leading-[22px]">Build visual</h3>
      <div className="mt-[5px] flex items-center pl-3">
        <button aria-label="Build visual" className="flex h-12 w-12 items-center justify-center rounded bg-[#d2d0ce]">
          <svg width="36" height="38" viewBox="0 0 36 38" fill="#117865" stroke="#252423" strokeWidth="1.600">
            <path d="M0 2H29" />
            <rect x="1" y="9" width="34" height="11" strokeDasharray="3 2" />
            <rect x="1" y="26" width="34" height="11" strokeDasharray="3 2" />
          </svg>
        </button>
        <button aria-label="Format visual" className="ml-[57px]">
          <svg width="37" height="36" viewBox="0 0 37 36" fill="none" stroke="#252423" strokeWidth="1.600">
            <path d="M6 35H1V1H16L27 12V15M16 1V12H27" />
            <path d="M36 14C30 15 22 22 19 28L24 31C28 26 34 20 36 14ZM19 28C14 26 14 32 8 34C14 37 23 36 24 31" />
          </svg>
        </button>
      </div>
      <svg viewBox="0 0 270 14" className="mt-[7px] h-[14px] w-full" preserveAspectRatio="xMinYMin slice" fill="none" stroke="#8a8886" strokeWidth="1.400">
        <path d="M0 12.500H24L36 1L48 12.500H400" />
      </svg>
      <div className="grid grid-cols-[repeat(6,42px)] auto-rows-[42px] pb-[6px] pl-[9px] pt-2">
        {gallery.map((g, i) => (
          <button key={i} aria-label={galleryNames[i]} title={galleryNames[i]} className="flex items-center justify-center">
            <svg width="28" height="28" viewBox="0 0 84 84" fill="none" stroke={DARK} strokeWidth="3.500" className="overflow-visible" fontFamily="Open Sans, sans-serif">{g}</svg>
          </button>
        ))}
      </div>
      <div className="border-t border-[#dedddc] pl-[6px] pr-[9px] pt-[13px]">
        <h3 className="pl-3 leading-6">Values</h3>
        <div className="mt-[8px] flex h-[42px] items-center rounded-sm border border-dashed border-[#b8b6b4] bg-white pb-1 pl-[15px]">Add data fields here</div>
        <h3 className="mt-[15px] pl-3 font-semibold leading-6 text-[#484644]">Drill through</h3>
        <div className="mt-[13px] flex items-center justify-between pl-3 pr-6 leading-6">Cross-report <Toggle id="cross" on={false} /></div>
        <div className="mt-4 flex items-center justify-between pl-3 pr-6 leading-6">Keep all filters <Toggle id="keep" on /></div>
        <div className="mt-[15px] flex h-[38px] items-center whitespace-nowrap rounded-sm border border-dashed border-[#b8b6b4] bg-white pl-3">Add drill-through fields here</div>
      </div>
    </aside>
  );
}

/* ---------- data pane ---------- */

function Small({ children }: P) {
  return <svg width="22" height="22" viewBox="0 0 22 22" fill="none" stroke="#252423" strokeWidth="1.600" className="shrink-0">{children}</svg>;
}

const fieldIcons: Record<string, React.ReactNode> = {
  date: <Small><rect x="1" y="2" width="17" height="17" rx="3" /><path d="M1 7H18" /><path d="M8 11.500H16M4.500 15.500H12" strokeWidth="2" strokeDasharray="2 2" /></Small>,
  tree: <Small><path d="M3 1H8V6H3ZM11 9H16V13H11ZM11 17H16V21H11ZM5 6V19H11M5 11H11" /></Small>,
  calcCol: <Small><path d="M10 17H4Q1 17 1 14V5Q1 2 4 2H14Q17 2 17 5V8M6 2V17M6 7H17M6 12H10M12 2V7" /><path d="M21 10H11.500L16 15L11.500 20H21" /></Small>,
  calc: <Small><rect x="1" y="1" width="17" height="18" rx="3" /><rect x="5" y="4" width="9" height="4" rx="1.500" /><path d="M4 12H16M4 15.500H16" strokeWidth="2.200" strokeDasharray="2 2" /></Small>,
  sum: <Small><path d="M17 2H3L10.500 10L3 18H17" /></Small>,
};

type Field = [string, string?, boolean?];
const tables: { name: string; fields: Field[] }[] = [
  { name: "calendar", fields: [["Date", "date", true], ["Start of Month", "date", true], ["Start of Mont...", "tree", true], ["Start of Week", "date", true]] },
  { name: "products", fields: [["Product_Cate..."], ["Product_Cost"], ["Product_ID"], ["Product_Name"], ["Product_Price"]] },
  {
    name: "sales",
    fields: [["Cost", "calcCol"], ["Price", "calcCol"], ["Profit", "calcCol"], ["Profit (M)", "calc"], ["Revenue", "calcCol"], ["Revenue (M)", "calc"], ["Sale_ID", "sum"], ["Total Orders", "calc"], ["Total Profit", "calc"], ["Total Revenue", "calc"], ["Units", "sum"]],
  },
  { name: "stores", fields: [["Store_City"], ["Store_ID"], ["Store_Location"], ["Store_Name"], ["Store_Open_D...", "date", true]] },
];

function DataPane() {
  return (
    <aside className="flex w-[270px] shrink-0 flex-col border-l border-[#dedddc] bg-[#f3f2f1] text-[17px] text-[#323130]">
      <div className="flex h-[58px] items-center justify-between pl-3 pr-[10px]">
        <h2 className="pt-[2px] text-[22px] font-semibold text-[#252423]">Data</h2>
        <button aria-label="Collapse data"><DoubleChevron /></button>
      </div>
      <label className="ml-[6px] mr-[5px] mt-[10px] flex h-9 shrink-0 items-center gap-2 rounded-md border border-b-2 border-[#c8c6c4] border-b-[#605e5c] bg-white pl-[18px]">
        <svg width="22" height="22" viewBox="0 0 22 22" fill="none" stroke="#605e5c" strokeWidth="1.600" className="shrink-0"><circle cx="9" cy="9" r="8" /><path d="M15 15L21 21" /></svg>
        <input aria-label="Search fields" placeholder="Search" className="h-full w-full min-w-0 bg-transparent pt-[2px] text-[19px] outline-none placeholder:text-[#797775]" />
      </label>
      <div className="mb-2 mt-3 flex min-h-0 flex-1 overflow-hidden">
        <ul className="min-w-0 flex-1 overflow-hidden pt-[2px]">
          {tables.map((t) => (
            <li key={t.name}>
              <div className="flex h-9 items-center pl-[19px]">
                <Chevron dir="down" w={19} h={10} stroke={1.4} />
                <svg width="18" height="18" viewBox="0 0 18 18" fill="none" stroke="#252423" strokeWidth="1.600" className="ml-[6px]">
                  <rect x="1" y="1" width="16" height="16" rx="3" /><path d="M1 6H17M1 12H17M6 1V17M12 1V17" />
                </svg>
                <span className="ml-[9px]">{t.name}</span>
              </div>
              <ul>
                {t.fields.map(([name, icon, open]) => (
                  <li key={name} className="flex h-9 items-center pl-[45px]">
                    <span className="w-[21px] shrink-0">{open && <Chevron dir="right" w={12} h={18} stroke={1.4} />}</span>
                    <label className="flex items-center whitespace-nowrap">
                      <input type="checkbox" className="h-[18px] w-[18px] appearance-none rounded-[3px] border border-[#797775] bg-[#f5f4f3]" />
                      <span className="ml-3 mr-[5px] flex w-[22px] shrink-0">{icon && fieldIcons[icon]}</span>
                      {name}
                    </label>
                  </li>
                ))}
              </ul>
            </li>
          ))}
        </ul>
        <div className="mb-[23px] mr-[5px] w-3 shrink-0 bg-[#c8c8c8]" />
      </div>
    </aside>
  );
}

function StatusBar() {
  return (
    <footer className="flex h-[38px] shrink-0 items-center border-b-2 border-t border-b-[#1b1a19] border-t-[#dedddc] bg-[#f3f2f1] pl-[7px] pr-[6px] text-[17px] text-[#484644]">
      <span>Page 1 of 1</span>
      <button aria-label="Zoom out" className="ml-auto"><svg width="7" height="10" stroke="#252423" strokeWidth="1.500"><path d="M0 5H7" /></svg></button>
      <input
        type="range"
        aria-label="Zoom"
        defaultValue={41}
        className="ml-2 h-4 w-[150px] appearance-none bg-[linear-gradient(#605e5c,#605e5c),linear-gradient(#605e5c,#605e5c)] bg-[length:100%_1px,1px_8px] bg-[position:center,50%_center] bg-no-repeat [&::-webkit-slider-thumb]:h-4 [&::-webkit-slider-thumb]:w-[6px] [&::-webkit-slider-thumb]:appearance-none [&::-webkit-slider-thumb]:bg-[#484644]"
      />
      <button aria-label="Zoom in" className="ml-[10px]"><svg width="11" height="11" stroke="#252423" strokeWidth="1.500"><path d="M5.500 0V11M0 5.500H11" /></svg></button>
      <button className="ml-[18px] w-9">84%</button>
      <button aria-label="Fit to page" className="ml-[28px]">
        <svg width="24" height="18" viewBox="0 0 24 18" fill="none" stroke="#484644" strokeWidth="1.500">
          <path d="M1 1H23V17H1ZM5 8V5H8M16 5H19V8M19 10V13H16M8 13H5V10M6 6L9 8M18 6L15 8M18 12L15 10M6 12L9 10" />
        </svg>
      </button>
      <a href="#update" className="ml-6 whitespace-nowrap">Update available (click to download)</a>
    </footer>
  );
}

export default function App() {
  return (
    <div className="flex h-screen flex-col overflow-hidden bg-[#f3f2f1] font-['Open_Sans',sans-serif]">
      <TitleBar />
      <Ribbon />
      <div className="flex min-h-0 flex-1">
        <Rail />
        <div className="flex min-w-0 flex-1 flex-col">
          <div className="flex min-h-0 flex-1">
            <Report />
            <FiltersStrip />
          </div>
          <PageTabs />
        </div>
        <Visualizations />
        <DataPane />
      </div>
      <StatusBar />
    </div>
  );
}
